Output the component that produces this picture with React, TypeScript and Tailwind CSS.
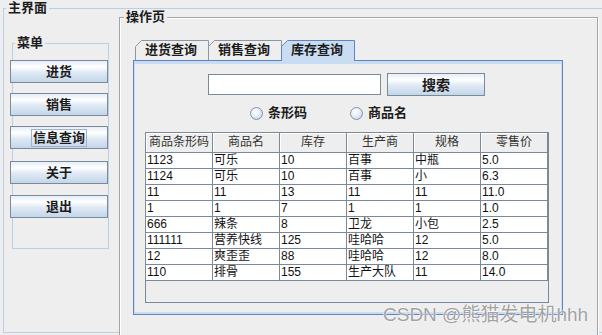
import React from "react";

const font = "font-['Liberation_Sans','Noto_Sans_CJK_SC',sans-serif]";

const menu = [
  { label: "进货", mt: "mt-[9px]" },
  { label: "销售", mt: "mt-[10px]" },
  { label: "信息查询", mt: "mt-[10px]", focus: true },
  { label: "关于", mt: "mt-[12px]" },
  { label: "退出", mt: "mt-[11px]" },
];

const cols = ["商品条形码", "商品名", "库存", "生产商", "规格", "零售价"];

const rows = [
  ["1123", "可乐", "10", "百事", "中瓶", "5.0"],
  ["1124", "可乐", "10", "百事", "小", "6.3"],
  ["11", "11", "13", "11", "11", "11.0"],
  ["1", "1", "7", "1", "1", "1.0"],
  ["666", "辣条", "8", "卫龙", "小包", "2.5"],
  ["111111", "营养快线", "125", "哇哈哈", "12", "5.0"],
  ["12", "爽歪歪", "88", "哇哈哈", "12", "8.0"],
  ["110", "排骨", "155", "生产大队", "11", "14.0"],
];

const buttonBg =
  "bg-[linear-gradient(to_bottom,#e4edf7_0%,#ffffff_28%,#dfe9f4_55%,#c3d6ea_100%)]";

function Title({ text, ml }: { text: string; ml: string }) {
  return (
    <div className={`-mt-[9px] flex h-[16px] ${ml}`}>
      <span className="bg-[#eeeeee] px-[2px] text-[13px] font-bold leading-[16px] text-[#1c1c1c]">
        {text}
      </span>
    </div>
  );
}

function Tab({ label, active }: { label: string; active?: boolean }) {
  const h = active ? 21 : 20;
  const w = 74;
  return (
    <div
      className={
        active
          ? "relative z-10 -mb-px -ml-px h-[21px] w-[74px]"
          : "relative -ml-px h-[20px] w-[74px] first:ml-0"
      }
    >
      <svg className="absolute inset-0" width={w} height={h}>
        <path
          d={`M0.5 ${h} V6.5 L6.5 0.5 H${w - 0.5} V${h}`}
          fill={active ? "#c8ddf2" : "#eeeeee"}
          stroke={active ? "#6382bf" : "#8a96a4"}
        />
      </svg>
      <span className="relative block pl-[10px] text-[13px] font-bold leading-[20px] text-[#1c1c1c]">
        {label}
      </span>
    </div>
  );
}

function Radio({ label }: { label: string }) {
  return (
    <div className="flex items-center">
      <span className="h-[13px] w-[13px] rounded-full border border-[#8193a8] bg-[radial-gradient(circle_at_40%_35%,#ffffff_0%,#e6eef7_45%,#b5cbe2_100%)]" />
      <span className="ml-[5px] text-[13px] font-bold leading-[16px] text-[#1c1c1c]">
        {label}
      </span>
    </div>
  );
}

export default function App() {
  return (
    <div className={`relative h-[335px] w-[602px] overflow-hidden bg-[#eeeeee] ${font}`}>
      <div className="ml-[3px] mt-[8px] h-[325px] w-[600px] border border-[#b8cfe5]">
        <Title text="主界面" ml="ml-[2px]" />
        <div className="flex items-start">
          {/* 菜单 */}
          <div className="ml-[8px] mt-[27px] h-[206px] w-[97px] border border-[#b8cfe5]">
            <Title text="菜单" ml="ml-[2px]" />
            <div className="flex flex-col">
              {menu.map((m) => (
                <div
                  key={m.label}
                  className={`-ml-[3px] flex h-[23px] w-[98px] items-center justify-center border border-[#7a8a99] ${buttonBg} ${m.mt}`}
                >
                  <span
                    className={
                      m.focus
                        ? "border border-[#9fb4cb] px-px text-[13px] font-bold leading-[16px] text-[#1c1c1c]"
                        : "text-[13px] font-bold leading-[16px] text-[#1c1c1c]"
                    }
                  >
                    {m.label}
                  </span>
                </div>
              ))}
            </div>
          </div>

          {/* 操作页 */}
          <div className="relative ml-[10px] mt-px h-[329px] w-[479px] border border-[#a3a3a3] bg-[#eeeeee] shadow-[inset_1px_1px_0_#ffffff,1px_1px_0_#ffffff]">
            <Title text="操作页" ml="ml-[4px]" />
            <div className="ml-[13px] mt-[15px] w-[430px]">
              <div className="ml-[2px] flex items-end">
                <Tab label="进货查询" />
                <Tab label="销售查询" />
                <Tab label="库存查询" active />
              </div>
              <div className="h-[255px] border border-[#6382bf]">
                <div className="h-full border-x border-b-2 border-t-[3px] border-[#c8ddf2]">
                  <div className="ml-[73px] mt-[9px] flex h-[23px] items-center">
                    <div className="h-[21px] w-[173px] border border-[#7a8a99] bg-white" />
                    <div
                      className={`ml-[6px] flex h-[23px] w-[98px] items-center justify-center border border-[#7a8a99] ${buttonBg}`}
                    >
                      <span className="text-[14px] font-bold leading-[16px] text-[#1c1c1c]">搜索</span>
                    </div>
                  </div>
                  <div className="ml-[115px] mt-[9px] flex h-[16px] items-center gap-[43px]">
                    <Radio label="条形码" />
                    <Radio label="商品名" />
                  </div>
                  <div className="ml-[10px] mt-[11px] h-[171px] w-[404px] border border-[#7a8a99] bg-[#eeeeee]">
                    <div className="grid grid-cols-[repeat(6,67px)]">
                      {cols.map((c) => (
                        <div
                          key={c}
                          className="h-[20px] border-b border-r border-[#7a8a99] bg-[#eeeeee] text-center text-[12px] leading-[19px] text-[#333333] shadow-[inset_1px_1px_0_#ffffff]"
                        >
                          {c}
                        </div>
                      ))}
                      {rows.map((r, i) =>
                        r.map((v, j) => (
                          <div
                            key={`${i}-${j}`}
                            className="h-[16px] overflow-hidden whitespace-nowrap border-b border-r border-[#7a8a99] bg-white pl-px text-[12px] leading-[15px] text-[#111111]"
                          >
                            {v}
                          </div>
                        ))
                      )}
                    </div>
                  </div>
                </div>
              </div>
            </div>
          </div>
        </div>
      </div>

      <div className="absolute left-[383px] top-[303px] text-[19px] leading-[24px] text-[#a2a2a2] [text-shadow:0_0_2px_#ffffff,0_0_1px_#ffffff]">
        CSDN @熊猫发电机hhh
      </div>
    </div>
  );
}
